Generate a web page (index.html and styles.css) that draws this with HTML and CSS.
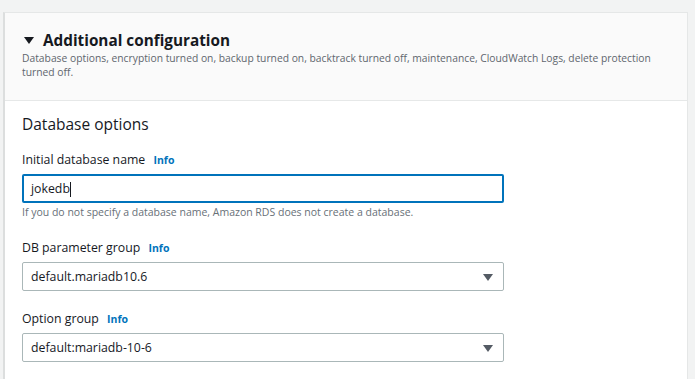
FILE: index.html
```html
<!DOCTYPE html>
<html lang="en">
<head>
    <meta charset="UTF-8">
    <meta name="viewport" content="width=device-width, initial-scale=1.0">
    <title>Additional configuration</title>
    <link rel="stylesheet" href="styles.css">
</head>
<body>
    <div class="panel">
        <div class="panel-header">
            <h2 class="panel-title"><span class="caret"></span>Additional configuration</h2>
            <p class="panel-desc">Database options, encryption turned on, backup turned on, backtrack turned off, maintenance, CloudWatch Logs, delete protection turned off.</p>
        </div>
        <div class="panel-body">
            <h3 class="section-title">Database options</h3>

            <div class="field">
                <label class="field-label">Initial database name <a class="info">Info</a></label>
                <div class="input focused">jokedb<span class="cursor"></span></div>
                <p class="hint">If you do not specify a database name, Amazon RDS does not create a database.</p>
            </div>

            <div class="field">
                <label class="field-label">DB parameter group <a class="info">Info</a></label>
                <div class="input select">default.mariadb10.6<span class="arrow"></span></div>
            </div>

            <div class="field">
                <label class="field-label">Option group <a class="info">Info</a></label>
                <div class="input select">default:mariadb-10-6<span class="arrow"></span></div>
            </div>
        </div>
    </div>
</body>
</html>
```

FILE: styles.css
```css
body {
    margin: 0;
    padding: 12px 7px 0 3px;
    background: #f2f3f3;
    font-family: "Open Sans", "Noto Sans", sans-serif;
    color: #16191f;
    overflow: hidden;
}
.panel {
    background: #fff;
    border: 1px solid #e5e7e7;
    border-left: 2px solid #dcdede;
    height: 380px;
}
.panel-header {
    background: #fafafa;
    border-bottom: 1px solid #e6e8e8;
    padding: 16px 20px 21px 17px;
}
.panel-title {
    margin: 0;
    font-size: 15.3px;
    font-weight: 700;
    line-height: 22px;
    display: flex;
    align-items: center;
}
.caret {
    width: 0;
    height: 0;
    border-left: 5px solid transparent;
    border-right: 5px solid transparent;
    border-top: 7px solid #16191f;
    margin: 0 9px 0 2px;
}
.panel-desc {
    margin: 0;
    font-size: 10.3px;
    line-height: 14px;
    color: #5f666e;
}
.panel-body {
    padding: 12px 20px 0 17px;
}
.section-title {
    margin: 0 0 16px;
    font-size: 15.5px;
    font-weight: 400;
    line-height: 22px;
}
.field {
    margin-bottom: 20px;
    width: 482px;
}
.field + .field {
    margin-bottom: 19px;
}
.field-label {
    display: block;
    font-size: 12.3px;
    line-height: 18px;
    margin-bottom: 5px;
}
.info {
    color: #0073bb;
    font-weight: 700;
    font-size: 10.5px;
    margin-left: 5px;
}
.input {
    position: relative;
    box-sizing: border-box;
    height: 29px;
    border: 1px solid #aab7b8;
    border-radius: 2px;
    padding: 0 8px;
    font-size: 12.3px;
    line-height: 27px;
    background: #fff;
}
.input.focused {
    border: 2px solid #0073bb;
    line-height: 25px;
    padding: 0 7px;
}
.cursor {
    display: inline-block;
    width: 1px;
    height: 15px;
    background: #16191f;
    vertical-align: middle;
}
.arrow {
    position: absolute;
    right: 10px;
    top: 11px;
    width: 0;
    height: 0;
    border-left: 5px solid transparent;
    border-right: 5px solid transparent;
    border-top: 7px solid #545b64;
}
.hint {
    margin: 2px 0 0;
    font-size: 10.5px;
    line-height: 14px;
    color: #687078;
}
```
